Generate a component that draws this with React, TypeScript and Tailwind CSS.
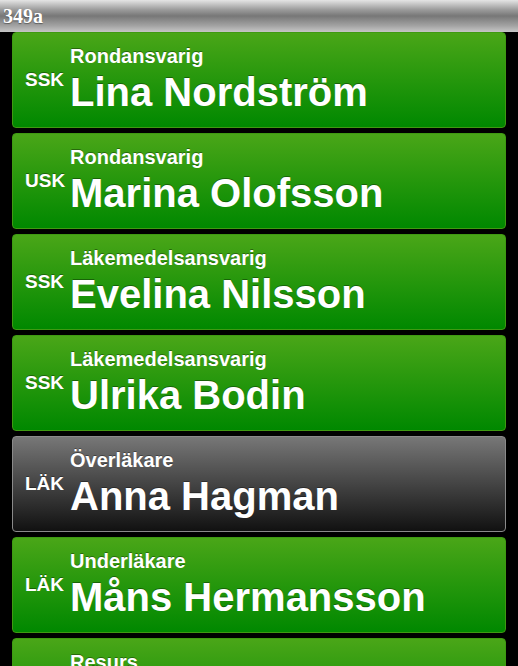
import * as React from "react"

type Person = { code: string; role: string; name: string; dark?: boolean }

const people: Person[] = [
  { code: "SSK", role: "Rondansvarig", name: "Lina Nordström" },
  { code: "USK", role: "Rondansvarig", name: "Marina Olofsson" },
  { code: "SSK", role: "Läkemedelsansvarig", name: "Evelina Nilsson" },
  { code: "SSK", role: "Läkemedelsansvarig", name: "Ulrika Bodin" },
  { code: "LÄK", role: "Överläkare", name: "Anna Hagman", dark: true },
  { code: "LÄK", role: "Underläkare", name: "Måns Hermansson" },
  { code: "SSK", role: "Resurs", name: "Sara Lindqvist" },
]

function Card({ person }: { person: Person }) {
  const bg = person.dark
    ? "bg-[linear-gradient(to_bottom,#777777,#111111)] border-[#8a8a8a]"
    : "bg-[linear-gradient(to_bottom,#4aa618,#008800)] border-[#3f9a12]"
  return (
    <div className={`flex h-[96px] shrink-0 items-start rounded-[4px] border pl-[12px] pt-[12px] text-white [text-shadow:0_-1px_0_rgba(0,0,0,0.35)] ${bg}`}>
      <span className="mt-[24px] w-[45px] text-[19px] font-bold leading-[22px]">{person.code}</span>
      <div className="flex flex-col">
        <span className="text-[20px] font-bold leading-[22px]">{person.role}</span>
        <span className="mt-[3px] whitespace-nowrap text-[40px] font-bold leading-[44px]">{person.name}</span>
      </div>
    </div>
  )
}

export default function App() {
  return (
    <div className="min-h-screen bg-black font-['Liberation_Sans',Arial,sans-serif]">
      <div className="h-[32px] bg-[linear-gradient(to_bottom,#e4e4e4_0%,#9c9c9c_30%,#777777_50%,#a2a2a2_80%,#c6c6c6_100%)] pl-[3px] font-['Liberation_Serif','Times_New_Roman',serif] text-[20px] font-bold leading-[32px] text-white [text-shadow:0_1px_1px_rgba(0,0,0,0.4)]">
        349a
      </div>
      <div className="flex flex-col gap-[5px] px-[12px] pb-[12px]">
        {people.map((p, i) => (
          <Card key={i} person={p} />
        ))}
      </div>
    </div>
  )
}
